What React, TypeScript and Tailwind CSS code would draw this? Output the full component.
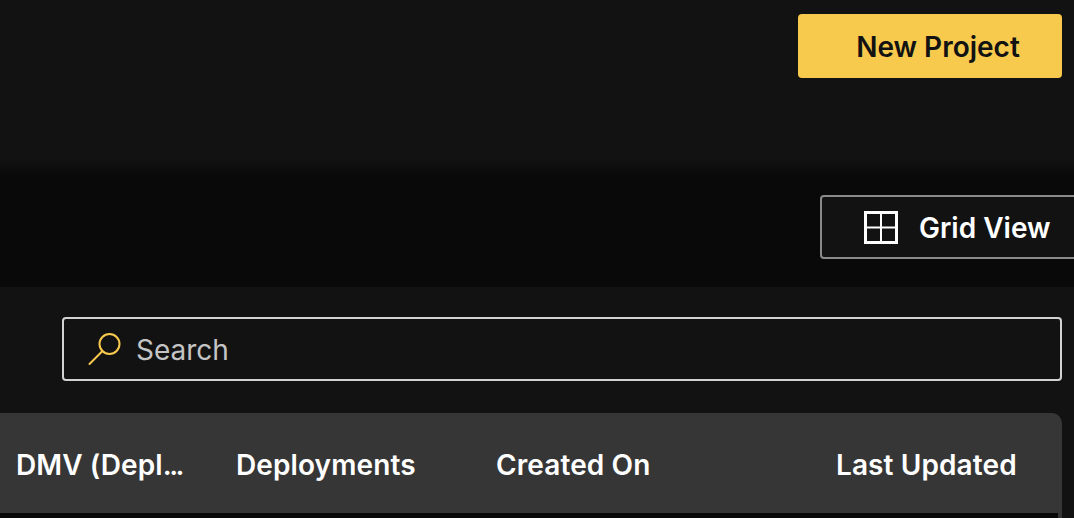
/**
 * Projects page: header action, view toggle, search and table head
 */
const FONT = "font-['Inter','Liberation_Sans',sans-serif]"

/** Four-pane grid icon */
function GridIcon() {
  return (
    <svg width="34" height="33" viewBox="0 0 34 33" fill="none" stroke="#ffffff" strokeWidth="3">
      <rect x="1.5" y="1.5" width="31" height="30" />
      <path d="M17 1.5V31.5M1.5 16.5H32.5" strokeWidth="2" />
    </svg>
  )
}

/** Magnifier with its handle to the lower left */
function SearchIcon() {
  return (
    <svg width="34" height="34" viewBox="0 0 34 34" fill="none" stroke="#f7ca4d" strokeWidth="2" strokeLinecap="round">
      <circle cx="21.5" cy="12" r="10" />
      <path d="M14.5 19L1.5 32" />
    </svg>
  )
}

export default function App() {
  return (
    <div className={`${FONT} flex h-[518px] w-[1074px] flex-col overflow-hidden bg-[#121212]`}>
      {/* Header */}
      <header className="flex h-[160px] shrink-0 items-start justify-end bg-[#121212] pr-3 pt-3.5">
        <button className="flex h-16 w-[264px] items-center justify-center rounded-[4px] bg-[#f7ca4d] pl-[16px] pt-[2px] text-[28px] font-semibold text-[#121212]">
          New Project
        </button>
      </header>

      {/* View toggle band */}
      <section className="flex h-[127px] shrink-0 items-start justify-end bg-gradient-to-b from-[#121212] from-0% to-[#090909] to-[12%] pt-[35px]">
        <button className="-mr-4 flex h-16 w-[270px] shrink-0 items-center gap-[21px] rounded-[4px] border-2 border-[#8a8a8a] bg-[#121212] pl-[42px] text-[28px] font-semibold text-white">
          <GridIcon />
          <span className="pt-[2px]">Grid View</span>
        </button>
      </section>

      {/* Search and table */}
      <main className="flex flex-1 flex-col bg-[#121212] pt-[30px]">
        <div className="ml-[62px] mr-3 flex h-16 items-center gap-[14px] rounded-[4px] border-2 border-[#d2d2d2] pl-6 text-[28px] text-[#c4c4c4]">
          <SearchIcon />
          <span className="pt-[2px]">Search</span>
        </div>
        <div className="mr-3 mt-8 overflow-hidden rounded-tr-[10px] bg-[#363636] pr-1">
          <div className="flex h-[100px] items-center pl-4 pt-[4px] text-[28px] font-semibold tracking-[0.1px] text-white">
            <div className="w-[220px] shrink-0 whitespace-nowrap">
              DMV (Depl<span className="tracking-[-2.5px]">...</span>
            </div>
            <div className="w-[260px] shrink-0 whitespace-nowrap">Deployments</div>
            <div className="w-[340px] shrink-0 whitespace-nowrap">Created On</div>
            <div className="w-[200px] shrink-0 whitespace-nowrap">Last Updated</div>
          </div>
          <div className="h-2 bg-[#080808]" />
        </div>
      </main>
    </div>
  )
}
